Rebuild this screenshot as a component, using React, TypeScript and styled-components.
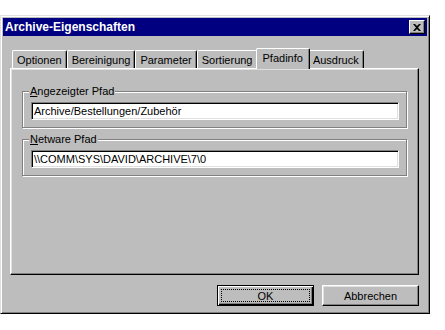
import React from 'react';
import styled, { createGlobalStyle, css } from 'styled-components';

const GlobalStyle = createGlobalStyle`
  html, body {
    margin: 0;
    padding: 0;
    background: #ffffff;
  }
  body {
    font-family: "Liberation Sans", Arial, sans-serif;
    font-size: 11px;
  }
`;

const Window = styled.div`
  width: 430px;
  height: 299px;
  margin-top: 15px;
  box-sizing: border-box;
  background: #bdbdbd;
  border: 1px solid;
  border-color: #dfdfdf #000 #000 #dfdfdf;
  box-shadow: inset 1px 1px #fff, inset -1px -1px #808080;
  padding: 2px;
  display: flex;
  flex-direction: column;
`;

const TitleBar = styled.div`
  height: 18px;
  background: #000080;
  color: #fff;
  font-weight: bold;
  font-size: 12px;
  display: flex;
  align-items: center;
  justify-content: space-between;
  padding: 0 2px 0 2px;
`;

const CloseButton = styled.div`
  width: 16px;
  height: 14px;
  box-sizing: border-box;
  background: #bdbdbd;
  border: 1px solid;
  border-color: #fff #000 #000 #fff;
  box-shadow: inset -1px -1px #808080;
  display: flex;
  align-items: center;
  justify-content: center;
`;

const Body = styled.div`
  flex: 1;
  padding: 12px 8px 0 7px;
  display: flex;
  flex-direction: column;
`;

const TabRow = styled.div`
  height: 20px;
  display: flex;
  align-items: flex-end;
  padding-left: 2px;
  position: relative;
  z-index: 1;
`;

const Tab = styled.div<{ $active?: boolean }>`
  box-sizing: border-box;
  height: 18px;
  padding: 1px 4px 0 4px;
  color: #000;
  display: flex;
  align-items: center;
  border-left: 1px solid #fff;
  border-top: 1px solid #fff;
  border-right: 1px solid #000;
  border-top-left-radius: 2px;
  border-top-right-radius: 2px;
  box-shadow: inset -1px 0 #808080;
  ${(p) =>
    p.$active &&
    css`
      height: 21px;
      margin: 0 -2px -1px -2px;
      padding: 0 6px 3px 6px;
      background: #bdbdbd;
      position: relative;
      z-index: 2;
    `}
`;

const Panel = styled.div`
  height: 207px;
  box-sizing: border-box;
  border: 1px solid;
  border-color: #fff #000 #000 #fff;
  box-shadow: inset -1px -1px #808080, inset 1px 1px #dfdfdf;
  padding: 22px 11px 0 11px;
  display: flex;
  flex-direction: column;
  gap: 11px;
`;

const Group = styled.div`
  position: relative;
  box-sizing: border-box;
  border: 1px solid #808080;
  box-shadow: 1px 1px #fff, inset 1px 1px #fff;
  padding: 10px 7px 7px 8px;
`;

const Legend = styled.span`
  position: absolute;
  top: -7px;
  left: 6px;
  padding: 0 1px;
  background: #bdbdbd;
  font-size: 11px;
  line-height: 13px;
  color: #000;
  u {
    text-decoration: underline;
  }
`;

const Edit = styled.div`
  height: 18px;
  box-sizing: border-box;
  background: #fff;
  border: 1px solid;
  border-color: #808080 #fff #fff #808080;
  box-shadow: inset 1px 1px #000, inset -1px -1px #dfdfdf;
  padding: 0 2px;
  display: flex;
  align-items: center;
  font-size: 11px;
  color: #000;
  white-space: nowrap;
`;

const Footer = styled.div`
  display: flex;
  justify-content: flex-end;
  gap: 8px;
  padding: 10px 0 0 0;
`;

const Button = styled.div<{ $default?: boolean }>`
  width: 97px;
  height: 21px;
  box-sizing: border-box;
  background: #bdbdbd;
  display: flex;
  align-items: center;
  justify-content: center;
  color: #000;
  font-size: 11px;
  border: 1px solid;
  border-color: #fff #000 #000 #fff;
  box-shadow: inset -1px -1px #808080, inset 1px 1px #dfdfdf;
  ${(p) =>
    p.$default &&
    css`
      border: 1px solid #000;
      box-shadow: inset 1px 1px #fff, inset -1px -1px #000, inset -2px -2px #808080;
    `}
`;

const FocusRect = styled.span`
  flex: 1;
  align-self: stretch;
  margin: 3px;
  border: 1px dotted #000;
  display: flex;
  align-items: center;
  justify-content: center;
`;

const tabs = ['Optionen', 'Bereinigung', 'Parameter', 'Sortierung', 'Pfadinfo', 'Ausdruck'];

export default function App() {
  return (
    <>
      <GlobalStyle />
      <Window>
        <TitleBar>
          <span>Archive-Eigenschaften</span>
          <CloseButton>
            <svg width="8" height="7" viewBox="0 0 8 7">
              <path d="M0 0h2l2 2 2-2h2L5 3.5 8 7H6L4 5 2 7H0l3-3.5z" fill="#000" />
            </svg>
          </CloseButton>
        </TitleBar>
        <Body>
          <TabRow>
            {tabs.map((t) => (
              <Tab key={t} $active={t === 'Pfadinfo'}>
                {t}
              </Tab>
            ))}
          </TabRow>
          <Panel>
            <Group>
              <Legend>
                <u>A</u>ngezeigter Pfad
              </Legend>
              <Edit>Archive/Bestellungen/Zubehör</Edit>
            </Group>
            <Group>
              <Legend>
                <u>N</u>etware Pfad
              </Legend>
              <Edit>\\COMM\SYS\DAVID\ARCHIVE\7\0</Edit>
            </Group>
          </Panel>
          <Footer>
            <Button $default>
              <FocusRect>OK</FocusRect>
            </Button>
            <Button>Abbrechen</Button>
          </Footer>
        </Body>
      </Window>
    </>
  );
}
